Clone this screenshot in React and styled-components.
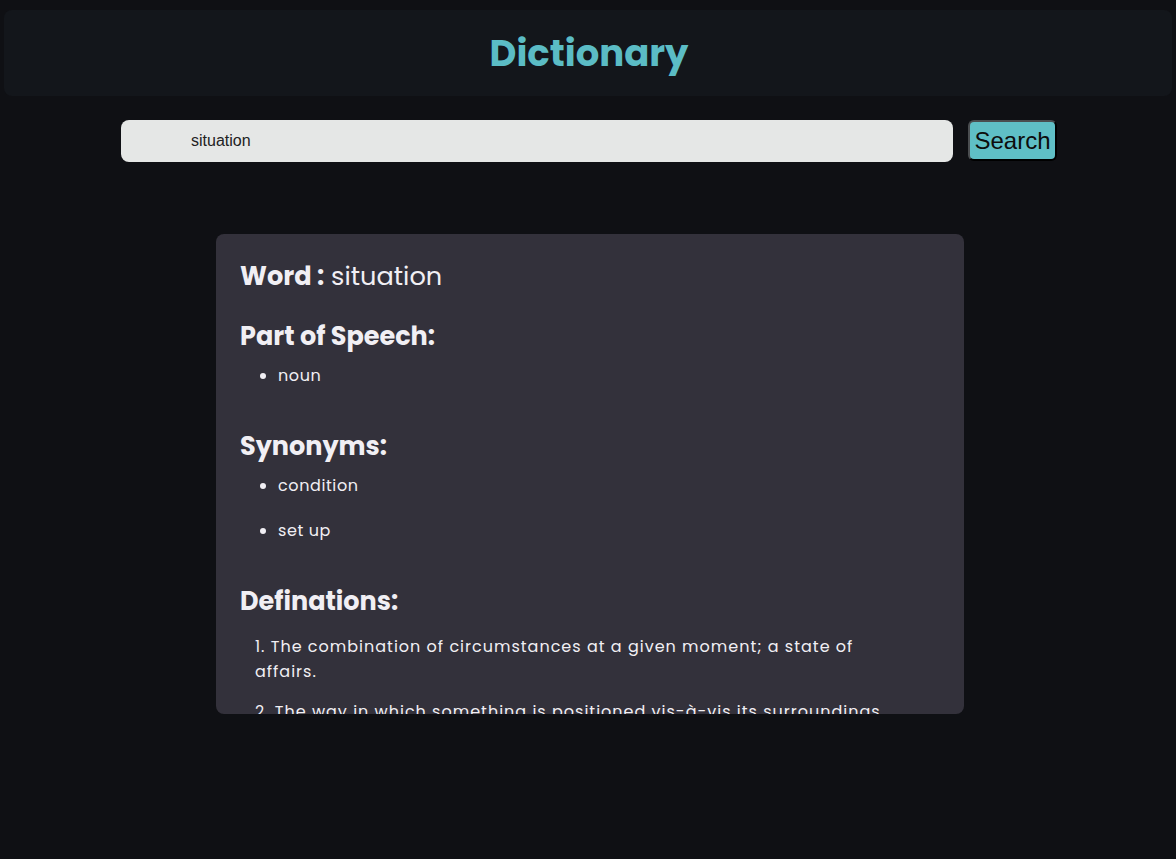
import styled, { createGlobalStyle } from "styled-components"

const GlobalStyle = createGlobalStyle`
  * {
    box-sizing: border-box;
  }
  body {
    margin: 0;
    background-color: #0f1014;
    font-family: 'Poppins', 'DejaVu Sans', sans-serif;
  }
`

const entry = {
  word: 'situation',
  partsOfSpeech: ['noun'],
  synonyms: ['condition', 'set up'],
  definitions: [
    'The combination of circumstances at a given moment; a state of affairs.',
    'The way in which something is positioned vis-à-vis its surroundings.',
    'The place in which something is situated; a location.',
  ],
}

const App = () => {
  const handleSubmit = (e) => {
    e.preventDefault()
  }

  return (
    <>
      <GlobalStyle />
      <Header>
        <Title>Dictionary</Title>
      </Header>

      <SearchForm onSubmit={handleSubmit}>
        <SearchInput type='text' defaultValue={entry.word} />
        <SearchButton type='submit'>Search</SearchButton>
      </SearchForm>

      <ResultCard>
        <WordLine>
          <strong>Word :</strong> {entry.word}
        </WordLine>

        <Section>
          <SectionTitle>Part of Speech:</SectionTitle>
          <BulletList>
            {entry.partsOfSpeech.map((p) => <BulletItem key={p}>{p}</BulletItem>)}
          </BulletList>
        </Section>

        <Section>
          <SectionTitle>Synonyms:</SectionTitle>
          <BulletList>
            {entry.synonyms.map((s) => <BulletItem key={s}>{s}</BulletItem>)}
          </BulletList>
        </Section>

        <Section>
          <SectionTitle>Definations:</SectionTitle>
          <DefinitionList>
            {entry.definitions.map((d) => <DefinitionItem key={d}>{d}</DefinitionItem>)}
          </DefinitionList>
        </Section>
      </ResultCard>
    </>
  )
}

const Header = styled.header`
  margin: 10px 4px 0;
  height: 86px;
  border-radius: 8px;
  background-color: #13161b;
  display: flex;
  align-items: center;
  justify-content: center;
`

const Title = styled.h1`
  margin: 0;
  color: #5bbcc5;
  font-size: 37px;
  font-weight: 700;
  transform: translateX(1px);
`

const SearchForm = styled.form`
  display: flex;
  justify-content: center;
  gap: 15px;
  margin-top: 24px;
  padding-left: 2px;
`

const SearchInput = styled.input`
  width: 832px;
  height: 42px;
  border: none;
  border-radius: 8px;
  padding: 0 70px;
  background-color: #e5e7e6;
  color: #222;
  font-family: 'Liberation Sans', Arial, sans-serif;
  font-size: 16px;
  outline: none;
`

const SearchButton = styled.button`
  width: 89px;
  height: 41px;
  padding: 0;
  border: 2px outset #4a4d50;
  border-radius: 6px;
  background-color: #5fbfc6;
  color: #0d0d0d;
  font-family: 'Liberation Sans', Arial, sans-serif;
  font-size: 24px;
  cursor: pointer;
`

const ResultCard = styled.main`
  width: 748px;
  height: 480px;
  margin: 72px auto 0;
  padding: 24px;
  border-radius: 8px;
  background-color: #33313b;
  color: #f1eff4;
  overflow: hidden;
  transform: translateX(2px);
`

const WordLine = styled.h2`
  margin: 0 0 26px;
  font-size: 25.6px;
  line-height: 36px;
  font-weight: 400;

  strong {
    font-weight: 700;
  }
`

const Section = styled.section`
  padding-bottom: 21px;
`

const SectionTitle = styled.h3`
  margin: 0 0 11px;
  font-size: 25.5px;
  line-height: 33px;
  font-weight: 700;
`

const BulletList = styled.ul`
  margin: 0;
  padding-left: 38px;
`

const BulletItem = styled.li`
  margin-bottom: 21px;
  font-size: 16px;
  line-height: 24px;
  letter-spacing: 0.6px;
`

const DefinitionList = styled.ol`
  margin: 16px 0 0;
  padding-left: 15px;
  width: 660px;
  list-style-position: inside;
`

const DefinitionItem = styled.li`
  margin-bottom: 15px;
  font-size: 16px;
  line-height: 25px;
  letter-spacing: 1px;
`

export default App
